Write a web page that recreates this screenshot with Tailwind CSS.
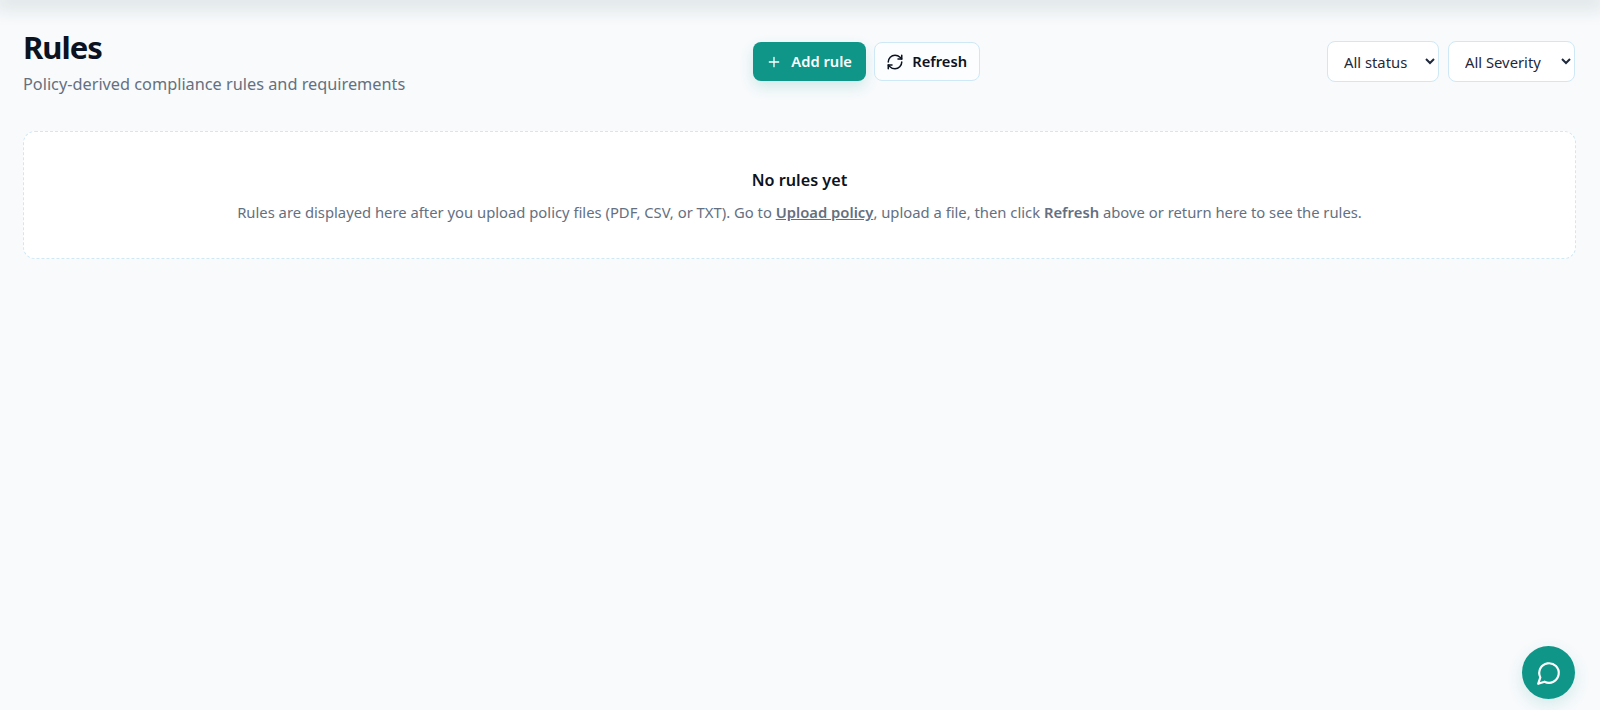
<!DOCTYPE html>
<html lang="en">
<head>
  <meta charset="UTF-8" />
  <meta name="viewport" content="width=device-width, initial-scale=1.0" />
  <title>Rules</title>
  <script src="https://cdn.jsdelivr.net/npm/@tailwindcss/browser@4"></script>
</head>
<body class="bg-[#f8fafc] h-[710px] overflow-hidden relative font-['Noto_Sans',sans-serif] text-[#0b1220]">

  <div class="h-0 shadow-[0_0_20px_6px_rgba(15,60,55,0.18)]"></div>

  <main class="pl-[23px] pr-6 pt-[27px]">
    <div class="flex items-start justify-between">
      <div>
        <h1 class="text-[31px] leading-10 font-bold tracking-[-1px]">Rules</h1>
        <p class="text-[16.3px] leading-6 text-[#64707f] mt-[5px]">Policy-derived compliance rules and requirements</p>
      </div>

      <div class="flex gap-2 mt-[15px]">
        <button class="h-[39px] w-[113px] rounded-lg bg-[#0f9688] text-white text-[14.7px] font-semibold flex items-center justify-center gap-[9px] shadow-[0_6px_14px_rgba(15,150,136,0.16)]">
          <svg class="w-4 h-4" viewBox="0 0 24 24" fill="none" stroke="currentColor" stroke-width="2" stroke-linecap="round"><path d="M5 12h14M12 5v14"/></svg>
          Add rule
        </button>
        <button class="h-[39px] w-[106px] rounded-lg bg-white/60 border border-[#cfe8f5] text-[14.7px] font-semibold flex items-center justify-center gap-[8px]">
          <svg class="w-[18px] h-[18px]" viewBox="0 0 24 24" fill="none" stroke="currentColor" stroke-width="2" stroke-linecap="round" stroke-linejoin="round"><path d="M3 12a9 9 0 0 1 9-9 9.75 9.75 0 0 1 6.74 2.74L21 8"/><path d="M21 3v5h-5"/><path d="M21 12a9 9 0 0 1-9 9 9.75 9.75 0 0 1-6.74-2.74L3 16"/><path d="M8 16H3v5"/></svg>
          Refresh
        </button>
      </div>

      <div class="flex gap-[9px] mt-[14px] mr-[1px]">
        <select class="h-[41px] w-[112px] rounded-lg bg-white border border-[#cfe8f5] pl-3 pr-1 text-[14.8px] text-[#1e293b]">
          <option>All status</option>
        </select>
        <select class="h-[41px] w-[127px] rounded-lg bg-white border border-[#cfe8f5] pl-3 pr-1 text-[14.8px] text-[#1e293b]">
          <option>All Severity</option>
        </select>
      </div>
    </div>

    <div class="mt-[35px] h-[128px] rounded-xl bg-white border border-dashed border-[#cfe8f5] flex flex-col items-center pt-[36px]">
      <h2 class="text-[16.2px] leading-6 font-semibold">No rules yet</h2>
      <p class="text-[14.8px] leading-5 text-[#64707f] mt-[10px]">Rules are displayed here after you upload policy files (PDF, CSV, or TXT). Go to <a class="font-semibold underline">Upload policy</a>, upload a file, then click <strong class="font-semibold">Refresh</strong> above or return here to see the rules.</p>
    </div>
  </main>

  <button class="absolute right-[25px] bottom-[11px] w-[53px] h-[53px] rounded-full bg-[#0f9688] text-white flex items-center justify-center shadow-[0_6px_16px_rgba(15,150,136,0.15)]">
    <svg class="w-[26px] h-[26px]" viewBox="0 0 24 24" fill="none" stroke="currentColor" stroke-width="2" stroke-linecap="round" stroke-linejoin="round"><path d="M7.9 20A9 9 0 1 0 4 16.1L2 22Z"/></svg>
  </button>

</body>
</html>
